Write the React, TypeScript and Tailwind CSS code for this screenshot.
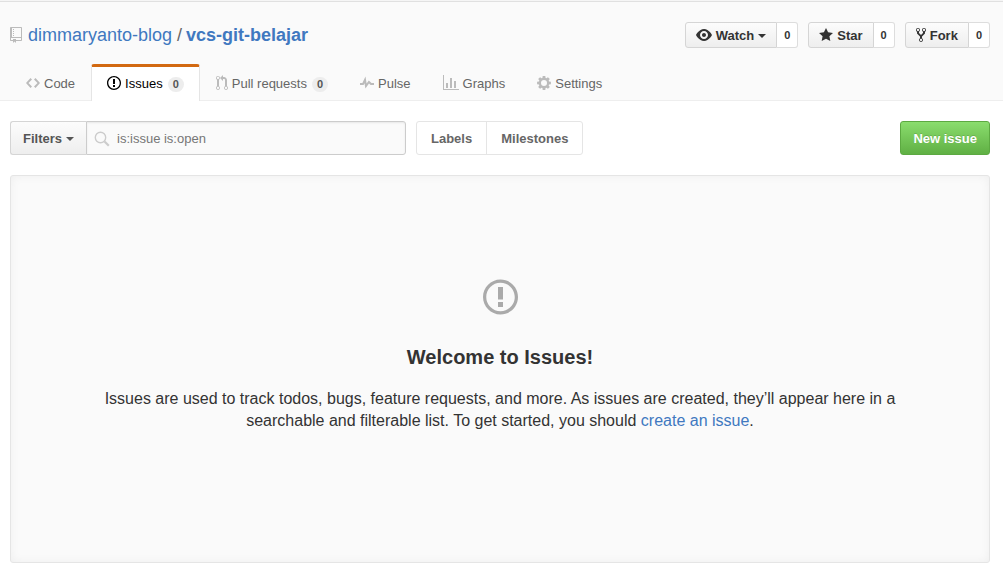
import type { ReactNode } from "react";

type Glyph = { w: number; d: string };

const glyphs = {
  repo: {
    w: 12,
    d: "M4 9H3V8h1v1zm0-3H3v1h1V6zm0-2H3v1h1V4zm0-2H3v1h1V2zm8-1v12c0 .55-.45 1-1 1H6v2l-1.5-1.5L3 16v-2H1c-.55 0-1-.45-1-1V1c0-.55.45-1 1-1h10c.55 0 1 .45 1 1zm-1 10H1v2h2v-1h3v1h5v-2zm0-10H2v9h9V1z",
  },
  issue: {
    w: 14,
    d: "M7 2.3c3.14 0 5.7 2.56 5.7 5.7s-2.56 5.7-5.7 5.7A5.71 5.71 0 0 1 1.3 8c0-3.14 2.56-5.7 5.7-5.7zM7 1C3.14 1 0 4.14 0 8s3.14 7 7 7 7-3.14 7-7-3.14-7-7-7zm1 3H6v5h2V4zm0 6H6v2h2v-2z",
  },
  code: {
    w: 14,
    d: "M9.5 3L8 4.5 11.5 8 8 11.5 9.5 13 14 8 9.5 3zm-5 0L0 8l4.5 5L6 11.5 2.5 8 6 4.5 4.5 3z",
  },
  pull: {
    w: 12,
    d: "M11 11.28V5c-.03-.78-.34-1.47-.94-2.06C9.46 2.35 8.78 2.03 8 2H7V0L4 3l3 3V4h1c.27.02.48.11.69.31.21.2.3.42.31.69v6.28A1.993 1.993 0 0 0 10 15a1.993 1.993 0 0 0 1-3.72zm-1 2.92c-.66 0-1.2-.55-1.2-1.2 0-.65.55-1.2 1.2-1.2.65 0 1.2.55 1.2 1.2 0 .65-.55 1.2-1.2 1.2zM4 3c0-1.11-.89-2-2-2a1.993 1.993 0 0 0-1 3.72v6.56A1.993 1.993 0 0 0 2 15a1.993 1.993 0 0 0 1-3.72V4.72c.59-.34 1-.98 1-1.72zm-.8 10c0 .66-.55 1.2-1.2 1.2-.65 0-1.2-.55-1.2-1.2 0-.65.55-1.2 1.2-1.2.65 0 1.2.55 1.2 1.2zM2 4.2C1.34 4.2.8 3.65.8 3c0-.65.55-1.2 1.2-1.2.65 0 1.2.55 1.2 1.2 0 .65-.55 1.2-1.2 1.2z",
  },
  pulse: {
    w: 14,
    d: "M11.5 8L8.8 5.4 6.6 8.5 5.5 1.6 2.38 8H0v2h3.6l.9-1.8.9 5.4L9 8.5l1.6 1.5H14V8h-2.5z",
  },
  graph: {
    w: 16,
    d: "M16 14v1H0V0h1v14h15zM5 13H3V8h2v5zm4 0H7V3h2v10zm4 0h-2V6h2v7z",
  },
  gear: {
    w: 14,
    d: "M5.4 3L5.7 1.1H8.3L8.6 3L9.4 3.33L10.96 2.2L12.8 4.04L11.67 5.6L12 6.4L13.9 6.7V9.3L12 9.6L11.67 10.4L12.8 11.96L10.96 13.8L9.4 12.67L8.6 13L8.3 14.9H5.7L5.4 13L4.6 12.67L3.04 13.8L1.2 11.96L2.33 10.4L2 9.6L.1 9.3V6.7L2 6.4L2.33 5.6L1.2 4.04L3.04 2.2L4.6 3.33zM7 5a3 3 0 1 0 0 6a3 3 0 1 0 0-6z",
  },
  eye: {
    w: 16,
    d: "M8.06 2C3 2 0 8 0 8s3 6 8.06 6C13 14 16 8 16 8s-3-6-7.94-6zM8 12c-2.2 0-4-1.78-4-4 0-2.2 1.8-4 4-4 2.22 0 4 1.8 4 4 0 2.22-1.78 4-4 4zm2-4c0 1.11-.89 2-2 2-1.11 0-2-.89-2-2 0-1.11.89-2 2-2 1.11 0 2 .89 2 2z",
  },
  star: {
    w: 14,
    d: "M14 6l-4.9-.64L7 1 4.9 5.36 0 6l3.6 3.26L2.67 14 7 11.67 11.33 14l-.93-4.74z",
  },
  fork: {
    w: 10,
    d: "M8 1a1.993 1.993 0 0 0-1 3.72V6L5 8 3 6V4.72A1.993 1.993 0 0 0 2 1a1.993 1.993 0 0 0-1 3.72V6.5l3 3v1.78A1.993 1.993 0 0 0 5 15a1.993 1.993 0 0 0 1-3.72V9.5l3-3V4.72A1.993 1.993 0 0 0 8 1zM2 4.2C1.34 4.2.8 3.65.8 3c0-.65.55-1.2 1.2-1.2.65 0 1.2.55 1.2 1.2 0 .65-.55 1.2-1.2 1.2zm3 10c-.66 0-1.2-.55-1.2-1.2 0-.65.55-1.2 1.2-1.2.65 0 1.2.55 1.2 1.2 0 .65-.55 1.2-1.2 1.2zm3-10c-.66 0-1.2-.55-1.2-1.2 0-.65.55-1.2 1.2-1.2.65 0 1.2.55 1.2 1.2 0 .65-.55 1.2-1.2 1.2z",
  },
} satisfies Record<string, Glyph>;

type IconName = keyof typeof glyphs;

function Icon({ name, size = 16, className = "" }: { name: IconName; size?: number; className?: string }) {
  const { w, d } = glyphs[name];
  return (
    <svg
      aria-hidden="true"
      viewBox={`0 0 ${w} 16`}
      width={(w * size) / 16}
      height={size}
      fill="currentColor"
      className={`shrink-0 ${className}`}
    >
      <path d={d} fillRule="evenodd" />
    </svg>
  );
}

function Caret() {
  return (
    <span
      aria-hidden="true"
      className="h-0 w-0 border-x-4 border-t-4 border-x-transparent border-t-current"
    />
  );
}

function SocialButton({ icon, label, count, caret }: { icon: IconName; label: string; count: number; caret?: boolean }) {
  return (
    <li className="flex h-[26px]">
      <button
        type="button"
        className="flex items-center gap-1 rounded-l-[3px] border border-[#d5d5d5] bg-linear-to-b from-[#fcfcfc] to-[#eeeeee] px-[10px] pt-px text-[13px] font-bold text-[#333333]"
      >
        <Icon name={icon} className="mb-[2px]" />
        {label}
        {caret && <Caret />}
      </button>
      <a
        href="#"
        className="flex items-center rounded-r-[3px] border border-l-0 border-[#dddddd] bg-white px-[7px] text-[11px] font-bold text-[#333333]"
      >
        {count}
      </a>
    </li>
  );
}

function Tab({ icon, label, count, active }: { icon: IconName; label: string; count?: number; active?: boolean }) {
  return (
    <a
      href="#"
      aria-current={active ? "page" : undefined}
      className={
        active
          ? "flex h-[37px] items-center rounded-t-[3px] border-x border-t-3 border-x-[#e5e5e5] border-t-[#d26911] bg-white px-[15px] text-black"
          : "flex h-[37px] items-center border-x border-t-3 border-transparent px-[15px] text-[#666666]"
      }
    >
      <Icon name={icon} className={active ? "mr-1 mb-[2px]" : "mr-1 mb-[2px] text-[#bbbbbb]"} />
      {label}
      {count !== undefined && (
        <span className="ml-[5px] rounded-full bg-[#ededed] px-[5px] text-[11px] leading-[15px] font-bold text-[#555555]">
          {count}
        </span>
      )}
    </a>
  );
}

function Container({ children, className = "" }: { children: ReactNode; className?: string }) {
  return <div className={`pr-[13px] pl-[10px] ${className}`}>{children}</div>;
}

export default function App() {
  return (
    <div className="min-h-screen bg-white font-['Liberation_Sans',Arial,sans-serif] text-[13px] text-[#333333]">
      <header className="border-b border-[#eeeeee] bg-[#fafafa]">
        <div className="h-[2px] border-b border-[#e0e0e0] bg-[#f5f5f5]" />
        <Container className="flex items-center justify-between pt-5">
          <h1 className="flex items-center text-[18px] leading-[26px] text-[#666666]">
            <Icon name="repo" className="mr-[6px] text-[#bbbbbb]" />
            <a href="#" className="text-[#4078c0]">
              dimmaryanto-blog
            </a>
            <span className="pr-1 pl-[5px]">/</span>
            <a href="#" className="font-bold text-[#4078c0]">
              vcs-git-belajar
            </a>
          </h1>
          <ul className="flex gap-[10px]">
            <SocialButton icon="eye" label="Watch" count={0} caret />
            <SocialButton icon="star" label="Star" count={0} />
            <SocialButton icon="fork" label="Fork" count={0} />
          </ul>
        </Container>
        <Container className="pt-4">
          <nav className="-mb-px flex">
            <Tab icon="code" label="Code" />
            <Tab icon="issue" label="Issues" count={0} active />
            <Tab icon="pull" label="Pull requests" count={0} />
            <Tab icon="pulse" label="Pulse" />
            <Tab icon="graph" label="Graphs" />
            <Tab icon="gear" label="Settings" />
          </nav>
        </Container>
      </header>

      <main>
        <Container className="py-5">
          <div className="flex items-center gap-[10px]">
            <form className="flex h-[34px] w-[396px]" onSubmit={(e) => e.preventDefault()}>
              <button
                type="button"
                className="flex items-center gap-1 rounded-l-[3px] border border-r-0 border-[#d5d5d5] bg-linear-to-b from-[#fcfcfc] to-[#eeeeee] px-3 pt-[2px] font-bold text-[#555555]"
              >
                Filters
                <Caret />
              </button>
              <label className="flex min-w-0 flex-1 items-center rounded-r-[3px] border border-[#cccccc] bg-[#fafafa] pt-[2px] pl-[7px] shadow-[inset_0_1px_2px_rgba(0,0,0,0.075)]">
                <svg
                  aria-hidden="true"
                  viewBox="0 0 16 16"
                  width="16"
                  height="16"
                  fill="none"
                  stroke="#cccccc"
                  className="shrink-0"
                >
                  <circle cx="6.5" cy="6.5" r="5.2" strokeWidth="1.4" />
                  <path d="M10.5 10.5L14.8 14.8" strokeWidth="2.2" />
                </svg>
                <input
                  type="text"
                  aria-label="Search all issues"
                  defaultValue="is:issue is:open"
                  className="ml-[7px] min-w-0 flex-1 bg-transparent text-[#767676] outline-none"
                />
              </label>
            </form>
            <div className="flex h-[34px] rounded-[3px] border border-[#e5e5e5] font-bold text-[#666666]">
              <a href="#" className="flex items-center border-r border-[#e5e5e5] px-[14px] pt-[2px]">
                Labels
              </a>
              <a href="#" className="flex items-center px-[14px] pt-[2px]">
                Milestones
              </a>
            </div>
            <button
              type="button"
              className="ml-auto h-[34px] rounded-[3px] border border-[#5ca941] bg-linear-to-b from-[#8add6d] to-[#60b044] px-3 pt-[2px] font-bold text-white [text-shadow:0_-1px_0_rgba(0,0,0,0.15)]"
            >
              New issue
            </button>
          </div>

          <section className="mt-5 flex flex-col items-center rounded-[3px] border border-[#e5e5e5] bg-[#fafafa] px-10 pt-[101px] pb-[130px] text-center shadow-[inset_0_0_10px_rgba(0,0,0,0.05)]">
            <Icon name="issue" size={40} className="text-[#aaaaaa]" />
            <h2 className="mt-[26px] text-[20px] leading-7 font-bold">Welcome to Issues!</h2>
            <p className="mt-[17px] max-w-[800px] text-[16px] leading-[22px]">
              Issues are used to track todos, bugs, feature requests, and more. As issues are created, they’ll appear
              here in a searchable and filterable list. To get started, you should{" "}
              <a href="#" className="text-[#4078c0]">
                create an issue
              </a>
              .
            </p>
          </section>
        </Container>
      </main>
    </div>
  );
}
